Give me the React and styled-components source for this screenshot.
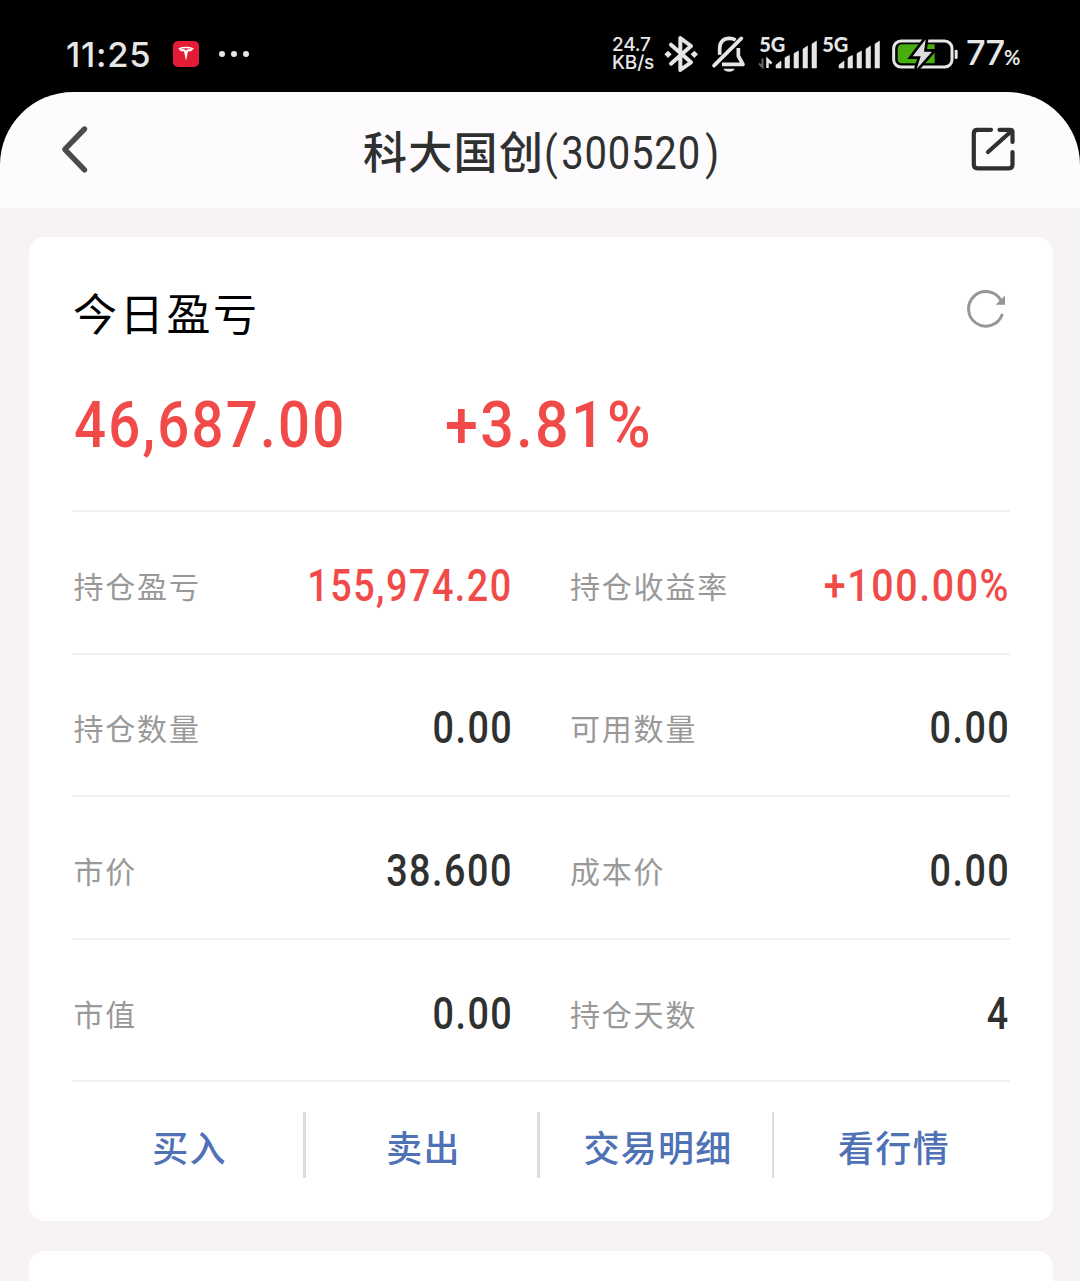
import React from 'react';
import styled, { createGlobalStyle } from 'styled-components';

const theme = {
  ink: '#2f3130',
  muted: '#999999',
  red: '#f04b49',
  blue: '#4f71b5',
  line: '#f0f0f0',
  page: '#f6f2f6',
  header: '#fefbff',
  status: '#e6e6e6',
};

const GlobalStyle = createGlobalStyle`
  body {
    margin: 0;
    background: ${theme.page};
    font-family: 'Noto Sans CJK SC', sans-serif;
  }

  * {
    box-sizing: border-box;
  }

  svg {
    display: block;
    flex: none;
    overflow: visible;
  }
`;

const Screen = styled.div`
  width: 1080px;
  height: 1281px;
  overflow: hidden;
  background: linear-gradient(#000 200px, ${theme.page} 200px);
`;

const StatusBar = styled.div`
  display: flex;
  align-items: center;
  height: 92px;
  padding: 15px 58px 0 66px;
  color: ${theme.status};
  font-family: Inter, sans-serif;
`;

const Clock = styled.div`
  width: 107px;
  padding-top: 2px;
  font-size: 34.5px;
  font-weight: 500;
  letter-spacing: 0.7px;
  line-height: 40px;
  white-space: nowrap;
`;

const StatusRight = styled.div`
  display: flex;
  align-items: center;
  margin-left: auto;
`;

const Speed = styled.div`
  display: flex;
  flex-direction: column;
  width: 52px;
  font-size: 19px;
  font-weight: 500;
  line-height: 18px;
  letter-spacing: -0.2px;
  white-space: nowrap;
`;

const Percent = styled.div`
  width: 56px;
  margin-left: 8px;
  padding-top: 3px;
  font-size: 34.5px;
  font-weight: 500;
  line-height: 40px;
  letter-spacing: -1px;
  white-space: nowrap;

  small {
    font-family: Lato, sans-serif;
    font-size: 20px;
    font-weight: 700;
  }
`;

const Header = styled.div`
  display: flex;
  align-items: center;
  justify-content: space-between;
  height: 116px;
  padding: 0 62px 0 58px;
  background: ${theme.header};
  border-radius: 73px 73px 0 0;
`;

const Title = styled.div`
  display: flex;
  align-items: flex-start;
  width: 360px;
  height: 64px;
  margin: -1px 0 0 24px;
  color: ${theme.ink};
  font-size: 44px;
  font-weight: 500;
  letter-spacing: 1.3px;
  line-height: 64px;
  white-space: nowrap;
`;

const Content = styled.div`
  padding: 29px 27px 0 29px;
  background: ${theme.page};
`;

const Card = styled.div`
  height: 984px;
  margin-bottom: 30px;
  padding: 0 43px;
  background: #fff;
  border-radius: 16px;
`;

const Summary = styled.div`
  height: 275px;
  padding: 41px 2px 0;
  border-bottom: 2px solid ${theme.line};
`;

const SummaryHead = styled.div`
  display: flex;
  justify-content: space-between;
  height: 70px;
  color: #000;
  font-size: 44px;
  letter-spacing: 2.7px;
  line-height: 69px;
  text-indent: -1px;

  svg {
    margin-top: 9px;
  }
`;

const SummaryFigures = styled.div`
  display: flex;
  height: 80px;
  margin-top: 37px;
`;

const FigureSlot = styled.div`
  width: ${props => props.$width}px;
`;

// Roboto squeezed sideways, close to the DIN figures of the trading app
const Figure = styled.span`
  display: block;
  color: ${props => (props.$up ? theme.red : theme.ink)};
  font-family: Roboto, sans-serif;
  font-size: ${props => props.$size}px;
  font-weight: 500;
  letter-spacing: 0.04em;
  line-height: 80px;
  white-space: nowrap;
  transform: scaleX(${props => props.$scale || 0.857});
  transform-origin: left center;
`;

const ValueFigure = styled(Figure)`
  margin-right: -2px;
  transform-origin: right center;
`;

const TitleCode = styled(Figure)`
  font-weight: 400;
  letter-spacing: 0.02em;
  line-height: 64px;
  transform: translateY(4px) scaleX(0.88);

  b {
    margin: 0 5px 0 3px;
    font-weight: 400;
  }
`;

const Row = styled.div`
  display: grid;
  grid-template-columns: 437.5px 438px;
  column-gap: 59px;
  height: 142.6px;
  padding-left: 1.5px;
  border-bottom: 2px solid ${theme.line};
`;

const Cell = styled.div`
  display: flex;
  align-items: center;
  justify-content: space-between;
  padding-top: 7px;
`;

const Label = styled.div`
  margin-top: -2px;
  color: ${theme.muted};
  font-size: 30px;
  font-weight: 400;
  letter-spacing: 1.8px;
  line-height: 44px;
`;

const Actions = styled.div`
  display: grid;
  grid-template-columns: 234px 234px 234px 1fr;
  padding-top: 30px;
`;

const Action = styled.div`
  height: 66px;
  padding-left: 4px;
  border-right: ${props => props.$divider}px solid #dedadd;
  color: ${theme.blue};
  font-size: 36px;
  font-weight: 500;
  letter-spacing: 1.3px;
  line-height: 68px;
  text-align: center;
`;

const AppBadge = () => (
  <svg width="26" height="26" viewBox="0 0 26 26">
    <rect width="26" height="26" rx="5" fill="#e31b35" />
    <path d="M5.6 7.9Q13 5.2 20.4 7.9" fill="none" stroke="#fff" strokeWidth="1.4" />
    <path d="M6 8.4Q7.2 10.8 11 10.3L13 19.8L15 10.3Q18.8 10.8 20 8.4Q17 7.8 14.6 8.2L13 9.4L11.4 8.2Q9 7.8 6 8.4Z" fill="#fff" />
  </svg>
);

const Dots = styled.div`
  display: flex;
  gap: 6px;
  margin-left: 20px;

  i {
    width: 6px;
    height: 6px;
    border-radius: 3px;
    background: ${theme.status};
  }
`;

const Bluetooth = () => (
  <svg width="34" height="38" viewBox="190 43 102 114" fill="none" stroke={theme.status} strokeWidth="12">
    <path d="M211 72L271 125L239 148V52L271 76L211 129" strokeLinecap="round" strokeLinejoin="round" />
    <path d="M202 90L213 101L202 112L191 101ZM281 90L292 101L281 112L270 101Z" fill={theme.status} stroke="none" />
  </svg>
);

const MutedBell = () => (
  <svg width="36" height="38" viewBox="331 45 108 114" fill="none" stroke={theme.status} strokeWidth="11">
    <path d="M357 104V86C357 66 368 55 386 55C394 55 400 57 405 60" />
    <path d="M413 84V108L427 133H364" strokeLinejoin="round" />
    <path d="M340 137L422 55" strokeLinecap="round" />
    <path d="M368 146H402C398 158 373 158 368 146Z" fill={theme.status} stroke="none" />
  </svg>
);

const Bars = ({ arrows }) => (
  <svg width="60" height="32" viewBox="0 0 60 32">
    <text x="1.2" y="14.2" fill={theme.status} fontFamily="Lato, sans-serif" fontSize="20" fontWeight="900">
      5G
    </text>
    <path
      d="M18 30V27L23 23V30ZM27 30V20Q27 19 31.5 17.5V30ZM36 30V15.5L40.5 13V30ZM45 30V11L49.5 8V30ZM54 30V6L58.5 3V30Z"
      fill={theme.status}
      stroke={theme.status}
      strokeLinejoin="round"
      strokeWidth="0.6"
    />
    {arrows && (
      <>
        <path d="M4.5 20.5V29L1 25.5" fill="none" stroke="#656565" strokeWidth="2" />
        <path d="M9.5 30V21.5L13.5 25.5" fill="none" stroke={theme.status} strokeWidth="2.5" />
      </>
    )}
  </svg>
);

const Battery = () => (
  <svg width="66" height="30" viewBox="247 55 198 90">
    <rect x="252" y="61" width="175" height="78" rx="22" fill="none" stroke={theme.status} strokeWidth="9" />
    <path d="M278 71H375V128H278Q264 128 264 114V85Q264 71 278 71Z" fill="#48ad0e" />
    <rect x="435" y="87" width="9" height="28" rx="4" fill={theme.status} />
    <path
      d="M348 56L309 107H333L321 145L367 93H343Z"
      fill="#dcdcdc"
      stroke="#000"
      strokeWidth="16"
      paintOrder="stroke"
    />
  </svg>
);

const BackIcon = () => (
  <svg width="34" height="54" viewBox="58 123 34 54">
    <path
      d="M84.5 129L64.8 149.4L84.5 169.8"
      fill="none"
      stroke="#4a4c4a"
      strokeLinecap="round"
      strokeLinejoin="round"
      strokeWidth="5.4"
    />
  </svg>
);

const ShareIcon = () => (
  <svg width="48" height="48" viewBox="970 126 48 48">
    <path
      d="M991 129.8H977.5Q973.8 129.8 973.8 133.5V164.5Q973.8 168.3 977.5 168.3H1009Q1012.5 168.3 1012.5 164.5V152M999.5 129.8H1010Q1012.5 129.8 1012.5 132V142M988 152L1011.5 131"
      fill="none"
      stroke={theme.ink}
      strokeLinecap="round"
      strokeWidth="4.2"
    />
  </svg>
);

const RefreshIcon = () => (
  <svg width="44" height="44" viewBox="964 287 44 44">
    <path
      d="M1002 315A17.3 17.3 0 1 1 1001 300.5"
      fill="none"
      stroke="#98959a"
      strokeLinecap="round"
      strokeWidth="3"
    />
    <path d="M1005 295.5V304.8H995.5Z" fill="#98959a" />
  </svg>
);

const rows = [
  [
    { label: '持仓盈亏', value: '155,974.20', up: true },
    { label: '持仓收益率', value: '+100.00%', up: true, scale: 0.895 },
  ],
  [
    { label: '持仓数量', value: '0.00' },
    { label: '可用数量', value: '0.00' },
  ],
  [
    { label: '市价', value: '38.600' },
    { label: '成本价', value: '0.00' },
  ],
  [
    { label: '市值', value: '0.00' },
    { label: '持仓天数', value: '4' },
  ],
];

const App = () => (
  <Screen>
    <GlobalStyle />
    <StatusBar>
      <Clock>11:25</Clock>
      <AppBadge />
      <Dots>
        <i />
        <i />
        <i />
      </Dots>
      <StatusRight>
        <Speed>
          <span>24.7</span>
          <span>KB/s</span>
        </Speed>
        <Bluetooth />
        <FigureSlot $width={13} />
        <MutedBell />
        <FigureSlot $width={11} />
        <Bars arrows />
        <FigureSlot $width={3} />
        <Bars />
        <FigureSlot $width={11} />
        <Battery />
        <Percent>
          77<small>%</small>
        </Percent>
      </StatusRight>
    </StatusBar>
    <Header>
      <BackIcon />
      <Title>
        科大国创
        <TitleCode $size={45.5}>
          (<b>300520</b>)
        </TitleCode>
      </Title>
      <ShareIcon />
    </Header>
    <Content>
      <Card>
        <Summary>
          <SummaryHead>
            今日盈亏
            <RefreshIcon />
          </SummaryHead>
          <SummaryFigures>
            <FigureSlot $width={371}>
              <Figure $size={65} $scale={0.866} $up>
                46,687.00
              </Figure>
            </FigureSlot>
            <Figure $size={65} $scale={0.91} $up>
              +3.81%
            </Figure>
          </SummaryFigures>
        </Summary>
        {rows.map(cells => (
          <Row key={cells[0].label}>
            {cells.map(cell => (
              <Cell key={cell.label}>
                <Label>{cell.label}</Label>
                <ValueFigure $size={44} $scale={cell.scale} $up={cell.up}>
                  {cell.value}
                </ValueFigure>
              </Cell>
            ))}
          </Row>
        ))}
        <Actions>
          <Action $divider={3}>买入</Action>
          <Action $divider={3}>卖出</Action>
          <Action $divider={2}>交易明细</Action>
          <Action $divider={0}>看行情</Action>
        </Actions>
      </Card>
      <Card />
    </Content>
  </Screen>
);

export default App;
